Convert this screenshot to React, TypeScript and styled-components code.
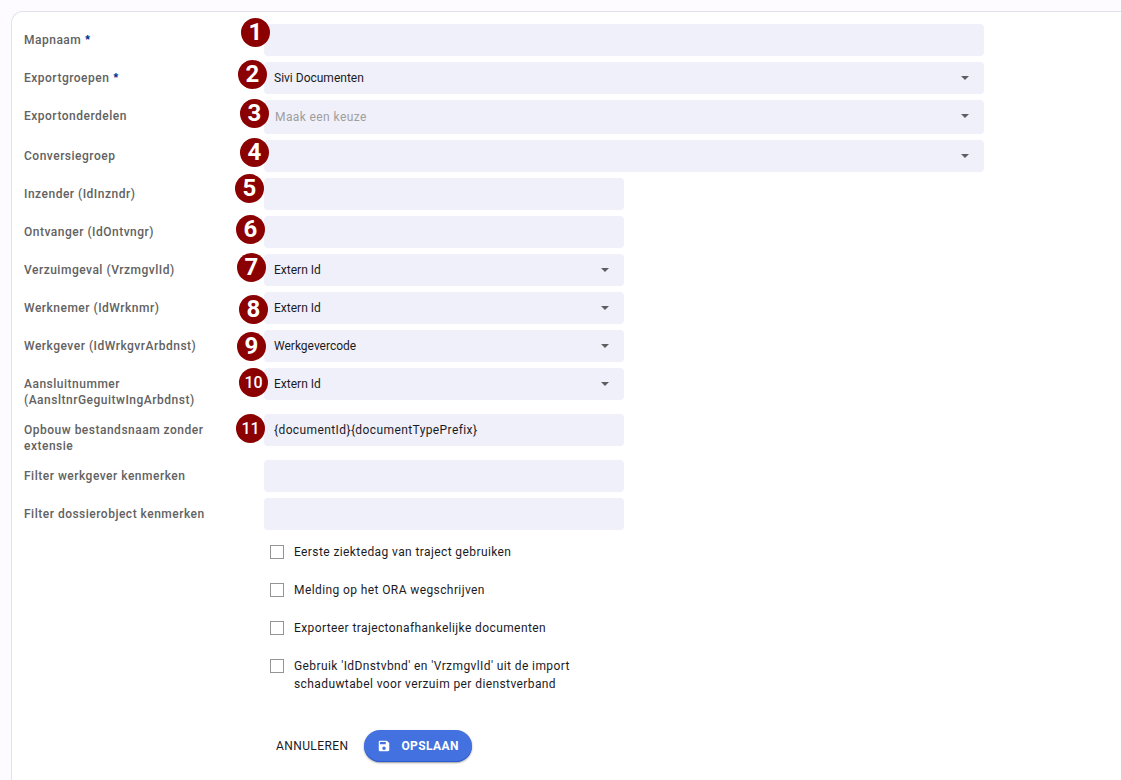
import React from "react";
import styled, { createGlobalStyle, css } from "styled-components";

const GlobalStyle = createGlobalStyle`
  *, *::before, *::after { box-sizing: border-box; }
  body {
    margin: 0;
    background: #fdfbff;
    color: #1b1b1f;
    font-family: Roboto, "Liberation Sans", sans-serif;
    font-size: 12px;
    letter-spacing: 0.4px;
  }
  input, select, button { font: inherit; letter-spacing: inherit; color: inherit; }
`;

const Page = styled.main`
  padding: 11px 0 0 11px;
`;

const Card = styled.form`
  display: flex;
  flex-direction: column;
  gap: 6px;
  min-height: calc(100vh - 11px);
  padding: 12px;
  background: #fff;
  border: 1px solid #e1e2ec;
  border-width: 1px 0 0 1px;
  border-top-left-radius: 12px;
`;

const Row = styled.div`
  display: grid;
  grid-template-columns: 240px minmax(0, 1fr);
  align-items: start;
`;

const Label = styled.label`
  padding: 8px 32px 0 0;
  color: #626262;
  font-weight: 500;
  line-height: 16px;
  letter-spacing: 0.5px;
`;

const Required = styled.span`
  margin-left: 4px;
  color: #00308f;
  font-family: "Liberation Sans", sans-serif;
  font-weight: 700;
`;

const Field = styled.div<{ $wide?: boolean }>`
  position: relative;
  width: 100%;
  max-width: ${(p) => (p.$wide ? 720 : 360)}px;
`;

const control = css`
  display: block;
  width: 100%;
  height: 32px;
  margin: 0;
  padding: 0 10px;
  border: 0;
  border-radius: 4px;
  background: #f0f0fa;
  letter-spacing: 0;
`;

const TextInput = styled.input`
  ${control}
  letter-spacing: 0.4px;
`;

const Select = styled.select<{ $placeholder?: boolean }>`
  ${control}
  appearance: none;
  ${(p) =>
    p.$placeholder &&
    css`
      height: 34px;
      padding-left: 11px;
      color: #9e9e9e;
      letter-spacing: 0.4px;
    `}
`;

const Arrow = styled.svg`
  position: absolute;
  top: 14px;
  right: 15px;
  width: 8px;
  height: 4px;
  fill: #5e5e62;
  pointer-events: none;
`;

const Marker = styled.span<{ $x: number; $y: number; $small: boolean }>`
  position: absolute;
  left: ${(p) => p.$x}px;
  top: ${(p) => p.$y}px;
  display: flex;
  align-items: center;
  justify-content: center;
  width: 29px;
  height: 29px;
  border-radius: 50%;
  background: #8b0000;
  color: #fff;
  font-family: Roboto, "Liberation Sans", sans-serif;
  font-size: ${(p) => (p.$small ? 16 : 24)}px;
  font-weight: ${(p) => (p.$small ? 500 : 700)};
  line-height: 29px;
  letter-spacing: 0;
  pointer-events: none;
`;

const CheckRow = styled.div`
  display: flex;
  align-items: flex-start;
  gap: 10px;
  min-height: 32px;
  max-width: 600px;
  padding: 7px 0 0 246px;
`;

const Checkbox = styled.input`
  flex: none;
  appearance: none;
  width: 14px;
  height: 14px;
  margin: 2px 0;
  border: 1px solid #949494;
  background: #fff;
  &:checked { background: #4371e0; }
`;

const CheckLabel = styled.label`
  line-height: 18px;
`;

const Actions = styled.div`
  display: flex;
  align-items: center;
  gap: 4px;
  padding: 31px 0 0 240px;
`;

const TextButton = styled.button`
  height: 32px;
  padding: 0 12px;
  border: 0;
  border-radius: 16px;
  background: transparent;
`;

const PrimaryButton = styled(TextButton)`
  display: flex;
  align-items: center;
  gap: 10px;
  padding: 0 13px;
  background: #4371e0;
  color: #fff;
  font-weight: 700;
  box-shadow: 0 1px 2px rgba(0, 0, 0, 0.4), inset 0 -1px 0 #2b5bd0;
`;

type Spec = {
  id: string;
  label: string;
  kind: "text" | "select";
  value?: string;
  required?: boolean;
  wide?: boolean;
  placeholder?: boolean;
  marker?: [number, number];
};

const fields: Spec[] = [
  { id: "mapnaam", label: "Mapnaam", kind: "text", required: true, wide: true, marker: [-23, -6] },
  { id: "exportgroepen", label: "Exportgroepen", kind: "select", value: "Sivi Documenten", required: true, wide: true, marker: [-26, -2] },
  { id: "exportonderdelen", label: "Exportonderdelen", kind: "select", value: "Maak een keuze", placeholder: true, wide: true, marker: [-24, -1] },
  { id: "conversiegroep", label: "Conversiegroep", kind: "select", value: "", wide: true, marker: [-24, -2] },
  { id: "inzender", label: "Inzender (IdInzndr)", kind: "text", marker: [-29, -4] },
  { id: "ontvanger", label: "Ontvanger (IdOntvngr)", kind: "text", marker: [-28, -1] },
  { id: "verzuimgeval", label: "Verzuimgeval (VrzmgvlId)", kind: "select", value: "Extern Id", marker: [-27, -1] },
  { id: "werknemer", label: "Werknemer (IdWrknmr)", kind: "select", value: "Extern Id", marker: [-25, 3] },
  { id: "werkgever", label: "Werkgever (IdWrkgvrArbdnst)", kind: "select", value: "Werkgevercode", marker: [-27, 2] },
  { id: "aansluitnummer", label: "Aansluitnummer (AansltnrGeguitwIngArbdnst)", kind: "select", value: "Extern Id", marker: [-25, 0] },
  { id: "opbouw", label: "Opbouw bestandsnaam zonder extensie", kind: "text", value: "{documentId}{documentTypePrefix}", marker: [-28, 0] },
  { id: "filter-werkgever", label: "Filter werkgever kenmerken", kind: "text" },
  { id: "filter-dossier", label: "Filter dossierobject kenmerken", kind: "text" },
];

const options = [
  "Eerste ziektedag van traject gebruiken",
  "Melding op het ORA wegschrijven",
  "Exporteer trajectonafhankelijke documenten",
  "Gebruik 'IdDnstvbnd' en 'VrzmgvlId' uit de import schaduwtabel voor verzuim per dienstverband",
];

const SaveIcon = () => (
  <svg width="14" height="14" viewBox="0 0 24 24" fill="currentColor" aria-hidden="true">
    <path d="M17 3H5a2 2 0 0 0-2 2v14a2 2 0 0 0 2 2h14c1.1 0 2-.9 2-2V7l-4-4zm-5 16a3 3 0 1 1 0-6 3 3 0 0 1 0 6zm3-10H5V5h10v4z" />
  </svg>
);

export default function App() {
  return (
    <>
      <GlobalStyle />
      <Page>
        <Card onSubmit={(e) => e.preventDefault()}>
          {fields.map((f, i) => (
            <Row key={f.id}>
              <Label htmlFor={f.id}>
                {f.label}
                {f.required && <Required>*</Required>}
              </Label>
              <Field $wide={f.wide}>
                {f.kind === "text" ? (
                  <TextInput id={f.id} type="text" defaultValue={f.value} />
                ) : (
                  <>
                    <Select id={f.id} $placeholder={f.placeholder}>
                      <option>{f.value}</option>
                    </Select>
                    <Arrow viewBox="0 0 8 4" aria-hidden="true">
                      <path d="M0 0h8L4 4z" />
                    </Arrow>
                  </>
                )}
                {f.marker && (
                  <Marker $x={f.marker[0]} $y={f.marker[1]} $small={i > 8}>
                    {i + 1}
                  </Marker>
                )}
              </Field>
            </Row>
          ))}
          {options.map((text, i) => (
            <CheckRow key={text}>
              <Checkbox type="checkbox" id={`optie-${i}`} />
              <CheckLabel htmlFor={`optie-${i}`}>{text}</CheckLabel>
            </CheckRow>
          ))}
          <Actions>
            <TextButton type="button">ANNULEREN</TextButton>
            <PrimaryButton type="submit">
              <SaveIcon />
              OPSLAAN
            </PrimaryButton>
          </Actions>
        </Card>
      </Page>
    </>
  );
}
